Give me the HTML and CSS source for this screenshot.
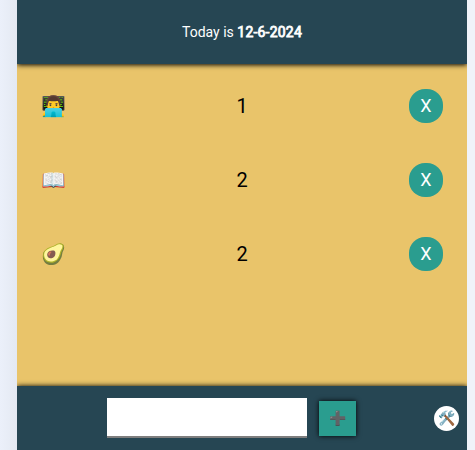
FILE: index.html
```html
<!DOCTYPE html>
<html lang="en">
<head>
<meta charset="utf-8">
<title>Daily counter</title>
<link rel="stylesheet" href="styles.css">
</head>
<body>
<div class="app">
  <header class="bar top"><p>Today is <strong>12-6-2024</strong></p></header>
  <main class="list">
    <div class="row"><span class="icon">👨‍💻</span><span class="count">1</span><button class="remove">X</button></div>
    <div class="row"><span class="icon">📖</span><span class="count">2</span><button class="remove">X</button></div>
    <div class="row"><span class="icon">🥑</span><span class="count">2</span><button class="remove">X</button></div>
  </main>
  <footer class="bar bottom">
    <input class="entry" type="text" aria-label="New item">
    <button class="add">➕</button>
    <button class="tools">🛠️</button>
  </footer>
</div>
</body>
</html>
```
FILE: styles.css
```css
* { box-sizing: border-box; }
body { margin: 0; background: linear-gradient(90deg, #ebf0fa 0, #e4e9f2 17px, #f0f3f9 18px); font-family: Roboto, sans-serif; }
button { font-family: inherit; padding: 0; border: 0; }
.app { width: 450px; height: 450px; margin-left: 17px; overflow: hidden; background: #e9c46a; display: flex; flex-direction: column; }
.bar { height: 64px; flex: none; display: flex; align-items: center; background: #264653; color: #fff; box-shadow: 0 0 5px #000; }
.top { justify-content: center; font-size: 14px; box-shadow: 0 1px 5px #000; }
.top strong { font-weight: 400; letter-spacing: 0.2px; -webkit-text-stroke: 0.8px #fff; }
.list { flex: 1; padding-top: 5px; }
.row { height: 74px; display: grid; grid-template-columns: 34px 1fr 34px; align-items: center; padding: 0 24px; font-size: 20px; }
.count { text-align: center; }
.remove { width: 34px; height: 34px; padding-bottom: 2px; border-radius: 16px; background: #2a9d8f; color: #fff; font-size: 18px; }
.bottom { padding-left: 90px; padding-right: 8px; }
.entry { width: 200px; height: 40px; border: 0; border-bottom: 2px solid #7e7e7e; }
.add { width: 37px; height: 35px; margin-left: 12px; background: #2a9d8f; box-shadow: 0 0 5px #000; font-size: 14px; }
.tools { width: 25px; height: 25px; margin-left: auto; border-radius: 50%; background: #fff; font-size: 14px; }
```
